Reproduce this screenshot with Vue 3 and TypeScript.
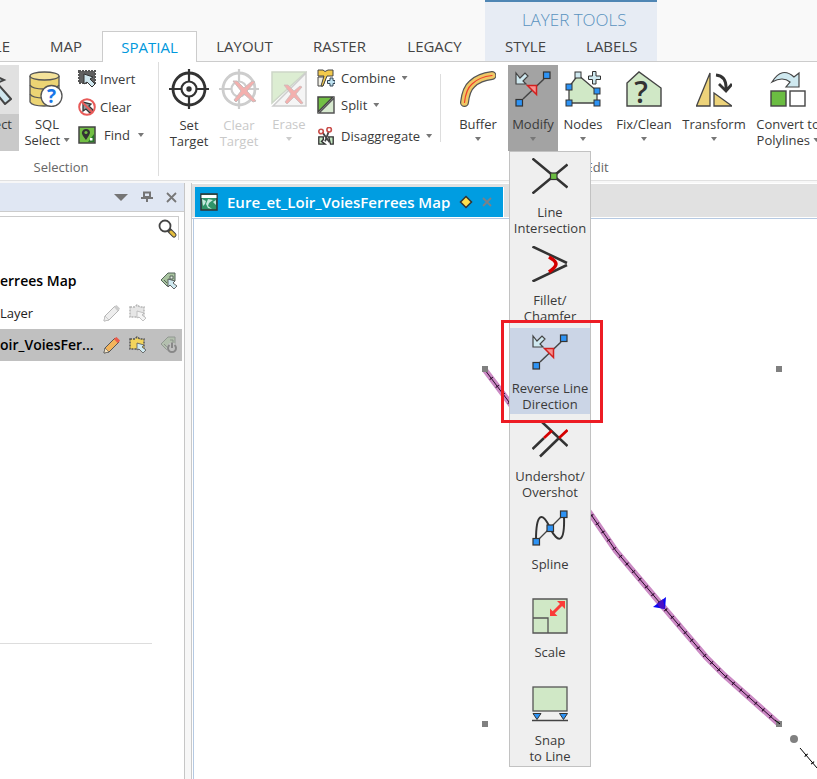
<script setup lang="ts">
import { ref } from 'vue'

interface Tool {
  icon: string
  lines: string[]
  arrow?: boolean
  inlineArrow?: boolean
  disabled?: boolean
  large?: boolean
}

const tabs = ['MAP', 'SPATIAL', 'LAYOUT', 'RASTER', 'LEGACY']
const layerTabs = ['STYLE', 'LABELS']
const activeTab = ref('SPATIAL')

const selectionActions: Tool[] = [
  { icon: 'invert', lines: ['Invert'] },
  { icon: 'clear', lines: ['Clear'] },
  { icon: 'find', lines: ['Find'], arrow: true },
]

const targetTools: Tool[] = [
  { icon: 'target', lines: ['Set', 'Target'], large: true },
  { icon: 'target-clear', lines: ['Clear', 'Target'], disabled: true, large: true },
  { icon: 'erase', lines: ['Erase'], arrow: true, disabled: true },
]

const objectActions: Tool[] = [
  { icon: 'combine', lines: ['Combine'], arrow: true },
  { icon: 'split', lines: ['Split'], arrow: true },
  { icon: 'disaggregate', lines: ['Disaggregate'], arrow: true },
]

const editTools: Tool[] = [
  { icon: 'buffer', lines: ['Buffer'], arrow: true },
  { icon: 'modify', lines: ['Modify'], arrow: true },
  { icon: 'nodes', lines: ['Nodes'], arrow: true },
  { icon: 'fix', lines: ['Fix/Clean'], arrow: true },
  { icon: 'transform', lines: ['Transform'], arrow: true },
  { icon: 'convert', lines: ['Convert to', 'Polylines'], inlineArrow: true },
]

const modifyMenu: Tool[] = [
  { icon: 'intersection', lines: ['Line', 'Intersection'] },
  { icon: 'fillet', lines: ['Fillet/', 'Chamfer'] },
  { icon: 'modify', lines: ['Reverse Line', 'Direction'] },
  { icon: 'undershot', lines: ['Undershot/', 'Overshot'] },
  { icon: 'spline', lines: ['Spline'] },
  { icon: 'scale', lines: ['Scale'] },
  { icon: 'snap', lines: ['Snap', 'to Line'] },
]
const highlighted = ref(2)
const search = ref('')

const railway = 'M291 151 L315 183 L398 297 L422 332 L466 384 L512 438 L530 456 L585 505'
</script>

<template>
  <div class="page">
    <svg class="sprite" aria-hidden="true">
      <symbol id="i-cursor" viewBox="0 0 28 35">
        <path d="M1 1 L1 22 L7 17 L21 34 L27 29 L13 13 L20 10 Z" fill="#cfe6ee" stroke="#444" stroke-width="2" />
      </symbol>
      <symbol id="i-sql" viewBox="0 0 36 36">
        <path d="M1 5 V31 Q3 35 15 35 Q28 35 30 31 V5" fill="#ecd474" stroke="#555" stroke-width="1.3" />
        <ellipse cx="15.500" cy="5" rx="14.500" ry="4" fill="#f4e29a" stroke="#555" stroke-width="1.3" />
        <path d="M1 14 Q3 18 15 18 Q28 18 30 14 M1 23 Q3 27 15 27" fill="none" stroke="#555" stroke-width="1.3" />
        <circle cx="22.500" cy="25" r="10.500" fill="#fff" stroke="#555" stroke-width="1.3" />
        <text x="22.500" y="32" text-anchor="middle" font-size="19" font-weight="700" fill="#1976e8">?</text>
      </symbol>
      <symbol id="i-invert" viewBox="0 0 18 18">
        <rect x="1" y="1" width="16" height="12" fill="#606060" stroke="#555" stroke-width="2" stroke-dasharray="2 1" />
        <path d="M6 4 V14 L9 12 L14 17 L17 14 L12 9 L15 7 Z" fill="#cfe6ee" stroke="#333" />
      </symbol>
      <symbol id="i-clear" viewBox="0 0 18 18">
        <path d="M5 4 V13 L8 11 L12 15 L15 12 L11 8 L13 6 Z" fill="#8d9a9e" stroke="#333" stroke-width="1.300" />
        <circle cx="9" cy="9" r="7.800" fill="none" stroke="#e85a58" stroke-width="2" />
        <path d="M4 4 L14 14" stroke="#e85a58" stroke-width="2" />
      </symbol>
      <symbol id="i-find" viewBox="0 0 18 18">
        <rect x="1" y="1" width="16" height="16" fill="#72bf44" stroke="#444" stroke-width="1.500" />
        <path d="M10 16 L16 8 V16 Z" fill="#27752a" />
        <path d="M8 14 Q3 8 4 6 Q5 3 8 3 Q12 3 12 7 Q11 10 8 14" fill="#333" />
        <circle cx="8" cy="6.500" r="1.600" fill="#72bf44" />
        <rect x="12" y="12" width="2.500" height="2.500" fill="#fff" />
      </symbol>
      <symbol id="i-target" viewBox="0 0 40 40">
        <g fill="none" stroke="#333" stroke-width="2.800">
          <circle cx="20" cy="20" r="16" />
          <circle cx="20" cy="20" r="7.500" stroke-width="2.200" />
          <path d="M20 0 V12 M20 28 V40 M0 20 H12 M28 20 H40" stroke-width="2.200" />
        </g>
        <circle cx="20" cy="20" r="2.700" fill="#333" />
      </symbol>
      <symbol id="i-target-clear" viewBox="0 0 40 40">
        <g fill="none" stroke="#cdcdcd" stroke-width="2.800">
          <circle cx="20" cy="20" r="16" />
          <circle cx="20" cy="20" r="7.500" stroke-width="2.200" />
          <path d="M20 0 V12 M20 28 V40 M0 20 H12 M28 20 H40" stroke-width="2.200" />
        </g>
        <path d="M14 12 L18 12 L25 19 L33 12 L36 13 L28 22 L37 32 L34 33 L25 25 L17 33 L15 31 L22 22 Z" fill="#f3b0ae" stroke="#c9bcbc" />
      </symbol>
      <symbol id="i-erase" viewBox="0 0 36 36">
        <path d="M1 1 H35 L1 32 Z" fill="#dcedd2" stroke="#cdd6c8" stroke-width="1.500" />
        <path d="M35 2 V35 H2 Z" fill="#f5f5f5" stroke="#cdcdcd" stroke-width="1.500" />
        <path d="M13 14 L17 14 L23 20 L29 15 L31 16 L25 23 L32 32 L30 33 L23 26 L16 33 L14 31 L20 23 Z" fill="#f3b0ae" stroke="#cbb" stroke-width=".8" />
      </symbol>
      <symbol id="i-combine" viewBox="0 0 18 18">
        <path d="M1 8 H9 L6 17 H1 Z" fill="#f0efe4" stroke="#444" />
        <path d="M1 1 H6 L8 2.500 L11 1 H16 V7 H10 L6 17 H4 L7 7 H1 Z" fill="#f2c94c" stroke="#444" />
        <path d="M13 9 H16 V11.500 H18 V14.500 H16 V17 H13 V14.500 H10.500 V11.500 H13 Z" fill="#bfe3f2" stroke="#345" />
      </symbol>
      <symbol id="i-split" viewBox="0 0 18 18">
        <path d="M1 1 H16 L1 16 Z" fill="#72bf44" stroke="#444" stroke-width="1.500" />
        <path d="M17 2 V17 H2 Z" fill="#d8ead0" stroke="#555" stroke-width="1.500" />
      </symbol>
      <symbol id="i-disaggregate" viewBox="0 0 18 20">
        <path d="M1 11 H6 V14 L4 16 L8 19 H1 Z M12 11 H17 V19 H14 Z" fill="#c2e6c0" stroke="#333" stroke-width="1.500" />
        <path d="M5 6 L13 17 M12 5 L8 16" stroke="#444" stroke-width="2" />
        <circle cx="3.500" cy="5" r="2.500" fill="none" stroke="#c94f4b" stroke-width="1.800" />
        <circle cx="12.500" cy="3" r="2.500" fill="none" stroke="#c94f4b" stroke-width="1.800" />
      </symbol>
      <symbol id="i-buffer" viewBox="0 0 36 36">
        <g fill="none" stroke-linecap="round">
          <path d="M4.500 31.500 Q6 18 12 13 Q19 6 32 4.500" stroke="#555" stroke-width="9" />
          <path d="M4.500 31.500 Q6 18 12 13 Q19 6 32 4.500" stroke="#efc765" stroke-width="6.600" />
          <path d="M4.500 31.500 Q6 18 12 13 Q19 6 32 4.500" stroke="#f0402c" stroke-width="1.200" />
        </g>
      </symbol>
      <symbol id="i-modify" viewBox="0 0 36 36">
        <path d="M8 28 L29 8" stroke="#444" stroke-width="1.500" />
        <path d="M1 2 V13 H11 L8 10 L13 5 L10 2 L5 7 Z" fill="#cfe9f0" stroke="#444" stroke-width="1.200" />
        <path d="M12.500 14.500 H21.500 V23.500 Z" fill="#f7918f" stroke="#d2201f" stroke-width="1.500" />
        <rect x="1" y="28.500" width="6.500" height="6.500" fill="#2d93f5" stroke="#333" stroke-width="1.200" />
        <rect x="28.500" y="1" width="6.500" height="6.500" fill="#2d93f5" stroke="#333" stroke-width="1.200" />
      </symbol>
      <symbol id="i-nodes" viewBox="0 0 36 36">
        <path d="M4 32 V16 L13 4 L32 20 V32 Z" fill="#d0e8c6" stroke="#444" stroke-width="1.300" />
        <g fill="#2d93f5" stroke="#333">
          <rect x="1" y="13" width="6" height="6" />
          <rect x="1" y="29" width="6" height="6" />
          <rect x="29" y="17" width="6" height="6" />
          <rect x="29" y="29" width="6" height="6" />
          <rect x="10" y="1" width="6" height="6" fill="#cfe9f0" />
          <path d="M27.500 0.500 H31 V5 H35.500 V8.500 H31 V13 H27.500 V8.500 H23.500 V5 H27.500 Z" fill="#cfe9f0" />
        </g>
      </symbol>
      <symbol id="i-fix" viewBox="0 0 36 36">
        <path d="M1 35 V12 L13 1 L35 17 V35 Z" fill="#d0e8c6" stroke="#444" stroke-width="1.400" />
        <text x="15" y="32" text-anchor="middle" font-size="30" font-weight="600" fill="#333">?</text>
      </symbol>
      <symbol id="i-transform" viewBox="0 0 36 36">
        <path d="M.5 35 L14 2 V35 Z M18 22 V35 H36 Z" fill="#edd37a" stroke="#444" stroke-width="1.300" />
        <path d="M20 4 Q31 5 30 19 M23 13 L30 20 L36 13" fill="none" stroke="#333" stroke-width="2.800" />
      </symbol>
      <symbol id="i-convert" viewBox="0 0 36 36">
        <path d="M2 11 Q12 -5 24 6 L29 2 V16 H16 L20 11 Q13 5 2 11 Z" fill="#cfe9f0" stroke="#444" stroke-width="1.200" />
        <rect x="1" y="20" width="15" height="15" fill="#6bbd42" stroke="#444" stroke-width="1.400" />
        <rect x="20" y="20" width="15" height="15" fill="#fff" stroke="#444" stroke-width="1.400" />
      </symbol>
      <symbol id="i-intersection" viewBox="0 0 36 36">
        <path d="M.5 .5 L35.500 29.500 M.5 35.500 L35.500 6.500" stroke="#333" stroke-width="2.500" />
        <rect x="18.500" y="15" width="6.500" height="6.500" fill="#6bbd42" stroke="#333" stroke-width="1.200" />
      </symbol>
      <symbol id="i-fillet" viewBox="0 0 36 36">
        <path d="M.5 .5 L35 17 M.5 35.500 L35 19" stroke="#333" stroke-width="2.500" />
        <path d="M17 11 Q24 15 24 18 Q24 21 17 26" fill="none" stroke="#d40000" stroke-width="3.500" />
      </symbol>
      <symbol id="i-undershot" viewBox="0 0 36 36">
        <path d="M10 0 L35.500 24 M.5 27 L12 16 M8 34.500 L27 16" stroke="#333" stroke-width="2.500" />
        <path d="M12 16 L20 8.500 M27 16 L35.500 8" stroke="#d40000" stroke-width="2.700" />
      </symbol>
      <symbol id="i-spline" viewBox="0 0 36 36">
        <path d="M4 32 L32 4" stroke="#444" stroke-width="1.200" />
        <path d="M4 30 C4 4 10 0 18 18 C26 34 33 34 32 6" fill="none" stroke="#333" stroke-width="2" />
        <g fill="#2d93f5" stroke="#333" stroke-width="1.200">
          <rect x="1" y="28.500" width="6.500" height="6.500" />
          <rect x="15" y="15" width="6.500" height="6.500" />
          <rect x="28.500" y="1" width="6.500" height="6.500" />
        </g>
      </symbol>
      <symbol id="i-scale" viewBox="0 0 36 36">
        <path d="M1 1 H35 V35 H1 Z M1 20 H16 V35" fill="#d0e8c6" stroke="#555" stroke-width="1.300" />
        <path d="M20 16 L31 5" stroke="#fb3b38" stroke-width="3" />
        <path d="M33 3 H25 L33 11 Z M18 18 V10.500 L25.500 18 Z" fill="#fb3b38" />
      </symbol>
      <symbol id="i-snap" viewBox="0 0 36 36">
        <rect x="1" y="1" width="34" height="24" fill="#d0e8c6" stroke="#555" stroke-width="1.300" />
        <path d="M0 34.500 H36" stroke="#444" stroke-width="1.300" />
        <path d="M1 27.500 H9 L5 33.500 Z M27.500 27.500 H35.500 L31.500 33.500 Z" fill="#2d93f5" stroke="#333" />
      </symbol>
      <symbol id="i-pencil" viewBox="0 0 18 18">
        <path d="M1 17 L2 12 L12 2 L16 6 L6 16 Z" fill="var(--pencil)" stroke="var(--edge)" />
        <path d="M12 2 L13.500 1 L17 4.500 L16 6 L14.500 7 L11 3 Z" fill="var(--tip)" />
        <path d="M1 17 L2 12 L6 16 Z" fill="var(--lead)" stroke="var(--edge)" stroke-width=".6" />
      </symbol>
      <symbol id="i-select" viewBox="0 0 18 18">
        <path d="M1 3 H6 L8 1 L11 3 H15 V13 H1 Z" fill="var(--area)" stroke="var(--edge)" stroke-width="1.500" stroke-dasharray="2 1" />
        <path d="M8 7 V14 L10 13 L14 17 L17 14 L13 11 L15 9 Z" fill="var(--arrow)" stroke="var(--edge)" stroke-width=".8" />
      </symbol>
      <symbol id="i-tag" viewBox="0 0 18 18">
        <path d="M1 8 L8 1 H15 V9 L9 14 H7 Z" fill="#a9c4a0" stroke="#55655a" />
        <path d="M4 8 L7 11 M10 4 H13 V7 H10 Z" fill="#e6eee2" stroke="#55655a" />
        <path d="M8 7 V15 L10 13 L14 17 L17 14 L13 11 L15 9 Z" fill="#cfe9f0" stroke="#444" stroke-width=".8" />
      </symbol>
      <symbol id="i-tag-off" viewBox="0 0 18 18">
        <path d="M1 8 L8 1 H15 V9 L9 14 H7 Z" fill="#b3bfae" stroke="#929892" />
        <path d="M4 8 L7 11 M10 4 H13 V7" fill="none" stroke="#8b928b" />
        <circle cx="12" cy="12" r="5.500" fill="#c0c0c0" />
        <path d="M9.500 9 A4 4 0 1 0 14.500 9 M12 6.500 V12" fill="none" stroke="#888" stroke-width="2" />
      </symbol>
    </svg>

    <nav class="tabs" aria-label="Ribbon tabs">
      <button class="tab cut" type="button">LE</button>
      <button
        v-for="tab in tabs"
        :key="tab"
        class="tab"
        :class="{ active: activeTab === tab, short: tab === 'MAP' }"
        type="button"
        @click="activeTab = tab"
      >{{ tab }}</button>
      <div class="layer-tools">
        <div class="layer-title">LAYER TOOLS</div>
        <div class="layer-tabs">
          <button v-for="tab in layerTabs" :key="tab" class="tab" type="button">{{ tab }}</button>
        </div>
      </div>
    </nav>

    <div class="ribbon">
      <section class="group selection">
        <div class="group-body">
          <button class="select-tool" type="button">
            <span class="select-icon"><svg><use href="#i-cursor" /></svg></span>
            <span class="select-label">ect</span>
          </button>
          <button class="tool sql" type="button">
            <svg class="icon"><use href="#i-sql" /></svg>
            <span>SQL</span>
            <span>Select <i class="caret inline" /></span>
          </button>
          <div class="stack">
            <button v-for="a in selectionActions" :key="a.icon" class="small" :class="a.icon" type="button">
              <svg class="small-icon"><use :href="'#i-' + a.icon" /></svg>
              <span>{{ a.lines[0] }}</span>
              <i v-if="a.arrow" class="caret" />
            </button>
          </div>
        </div>
        <div class="group-label">Selection</div>
      </section>

      <section class="group target">
        <div class="group-body">
          <button
            v-for="t in targetTools"
            :key="t.icon"
            class="tool"
            :class="{ disabled: t.disabled }"
            :disabled="t.disabled"
            type="button"
          >
            <svg class="icon" :class="{ large: t.large }"><use :href="'#i-' + t.icon" /></svg>
            <span v-for="l in t.lines" :key="l">{{ l }}</span>
            <i v-if="t.arrow" class="caret below" />
          </button>
          <div class="stack objects">
            <button v-for="a in objectActions" :key="a.icon" class="small" :class="a.icon" type="button">
              <svg class="small-icon"><use :href="'#i-' + a.icon" /></svg>
              <span>{{ a.lines[0] }}</span>
              <i class="caret" />
            </button>
          </div>
        </div>
      </section>

      <section class="group edit">
        <div class="group-body">
          <div v-for="t in editTools" :key="t.icon" class="tool-slot" :class="t.icon">
            <button class="tool" :class="{ open: t.icon === 'modify' }" type="button">
              <svg class="icon"><use :href="'#i-' + t.icon" /></svg>
              <span v-for="(l, i) in t.lines" :key="l">{{ l }} <i v-if="t.inlineArrow && i === 1" class="caret inline" /></span>
              <i v-if="t.arrow" class="caret below" />
            </button>
            <div v-if="t.icon === 'modify'" class="menu" role="menu">
              <button
                v-for="(m, i) in modifyMenu"
                :key="m.lines[0]"
                class="menu-item"
                :class="{ hot: highlighted === i }"
                role="menuitem"
                type="button"
              >
                <svg class="icon"><use :href="'#i-' + m.icon" /></svg>
                <span v-for="l in m.lines" :key="l">{{ l }}</span>
              </button>
            </div>
          </div>
        </div>
        <div class="group-label">Edit</div>
      </section>
    </div>

    <div class="workspace">
      <aside class="layers">
        <header class="panel-head">
          <button type="button" aria-label="Panel options"><svg width="14" height="10"><path d="M0 2 H14 L7 9 Z" fill="#757575" /></svg></button>
          <button type="button" aria-label="Pin panel"><svg width="12" height="12"><path d="M3 1.500 H9 V6 H3 Z M0 7 H12 M6 7 V11" fill="none" stroke="#757575" stroke-width="2" /></svg></button>
          <button type="button" aria-label="Close panel"><svg width="11" height="11"><path d="M1 1 L10 10 M10 1 L1 10" stroke="#777" stroke-width="1.800" /></svg></button>
        </header>
        <div class="search">
          <input v-model="search" type="text" aria-label="Search layers" />
          <svg width="20" height="20" viewBox="0 0 20 20">
            <path d="M11 11 L16 16" stroke="#444" stroke-width="5" stroke-linecap="round" />
            <path d="M13 13 L16 16" stroke="#e5bd3c" stroke-width="3" stroke-linecap="round" />
            <circle cx="7" cy="7" r="5.500" fill="#fff" stroke="#444" stroke-width="1.800" />
          </svg>
        </div>
        <div class="layer-row">
          <strong>errees Map</strong>
          <svg class="small-icon"><use href="#i-tag" /></svg>
        </div>
        <div class="layer-row faded">
          <span>Layer</span>
          <svg class="small-icon"><use href="#i-pencil" /></svg>
          <svg class="small-icon"><use href="#i-select" /></svg>
          <i class="no-icon" />
        </div>
        <div class="layer-row current">
          <strong>oir_VoiesFer...</strong>
          <svg class="small-icon"><use href="#i-pencil" /></svg>
          <svg class="small-icon"><use href="#i-select" /></svg>
          <svg class="small-icon tag-off"><use href="#i-tag-off" /></svg>
        </div>
        <hr />
      </aside>

      <main class="map-window">
        <div class="doc-tabs">
          <div class="doc-tab">
            <svg width="18" height="18">
              <rect x="1" y="1" width="16" height="16" fill="#2f9468" stroke="#333" stroke-width="1.500" />
              <path d="M1.500 2 H16.500 V5 H1.500 Z" fill="#fff" />
              <path d="M2 6 L6 8 L5 11 L3 13 Z M8 6 L13 7 L9 10 L8 13 L12 16 L8 15 L6 11 Z M13 9 L16 7 V12 Z" fill="#c5e8dc" />
            </svg>
            <span>Eure_et_Loir_VoiesFerrees Map</span>
            <svg width="14" height="14"><path d="M7 1.500 L12.500 7 L7 12.500 L1.500 7 Z" fill="#ffe04d" stroke="#333" stroke-width="1.500" /></svg>
            <button type="button" aria-label="Close map"><svg width="10" height="10"><path d="M1 1 L9 9 M9 1 L1 9" stroke="#7c8187" stroke-width="1.800" /></svg></button>
          </div>
        </div>
        <div class="canvas">
          <svg width="623" height="560" role="img" aria-label="Railway line with selection handles">
            <path :d="railway" fill="none" stroke="#cb8ac4" stroke-width="6" />
            <path :d="railway" fill="none" stroke="#2b0a2b" stroke-width="1" />
            <path :d="railway" fill="none" stroke="#2b0a2b" stroke-width="4" stroke-dasharray="1 9" />
            <path d="M472 378 L459 388 L471 390 Z" fill="#0707f5" />
            <path d="M463 385 L469 380 L471 390 L466 389 Z" fill="#4a0fc4" />
            <g fill="#808080">
              <rect x="288" y="147" width="6" height="6" />
              <rect x="582" y="147" width="6" height="6" />
              <rect x="288" y="502" width="6" height="6" />
              <rect x="582" y="502" width="6" height="6" />
              <circle cx="600" cy="520" r="4" />
            </g>
            <path d="M581 501 L586 505 M606 529 L623 549" stroke="#000" />
            <path d="M606 529 L623 549" stroke="#000" stroke-width="4" stroke-dasharray="1 9" stroke-dashoffset="-9" />
          </svg>
        </div>
      </main>
    </div>
  </div>
</template>

<style>
body {
  margin: 0;
  background: #fff;
}
</style>

<style scoped>
.page {
  display: flex;
  flex-direction: column;
  min-height: 100vh;
  overflow: hidden;
  background: #fff;
  color: #3a3a3a;
  font: 13px/16px "Open Sans", "Noto Sans", sans-serif;
}

.page * {
  box-sizing: border-box;
}

button {
  padding: 0;
  border: 0;
  background: none;
  color: inherit;
  font: inherit;
}

.sprite {
  display: none;
}

.tabs {
  display: flex;
  align-items: flex-end;
  height: 62px;
  border-bottom: 1px solid #ccc;
  background: #f9f9f9;
  color: #444;
}

.tab {
  min-width: 95px;
  height: 30px;
  font-size: 15px;
  line-height: 30px;
  text-align: center;
  white-space: nowrap;
}

.tab.short {
  min-width: 72px;
}

.tab.cut {
  display: flex;
  justify-content: flex-end;
  width: 30px;
  min-width: 0;
  padding-right: 20px;
}

.tab.active {
  height: 31px;
  margin-bottom: -1px;
  border: 1px solid #ccc;
  border-bottom: 0;
  background: #fff;
  color: #0098dc;
}

.layer-tools {
  height: 61px;
  margin-left: 3px;
  border-top: 2px solid #4f86b4;
  background: #e7ecf4;
}

.layer-title {
  height: 29px;
  padding-left: 6px;
  color: #5a93bf;
  font-size: 17px;
  font-weight: 300;
  line-height: 36px;
  text-align: center;
}

.layer-tabs {
  display: flex;
}

.layer-tabs .tab {
  min-width: 0;
  flex: 1 0 auto;
  padding: 0 20px;
}

.layer-tools {
  min-width: 172px;
}

.ribbon {
  display: flex;
  height: 119px;
  border-bottom: 1px solid #e1e1e1;
  background: #fff;
}

.group {
  display: flex;
  flex: none;
  flex-direction: column;
}

.selection {
  width: 159px;
  height: 114px;
  border-right: 1px solid #ddd;
}

.target {
  width: 282px;
  background: linear-gradient(#ddd, #ddd) right 12px / 1px 68px no-repeat;
}

.edit {
  padding-left: 7px;
}

.group-body {
  display: flex;
  height: 97px;
  padding-top: 3px;
}

.target .group-body {
  padding-left: 5px;
}

.group-label {
  height: 16px;
  color: #666;
  text-align: center;
}

.selection .group-label {
  padding-right: 36px;
}

.edit .group-label {
  width: 298px;
}

.select-tool {
  display: flex;
  flex-direction: column;
  width: 19px;
  height: 86px;
}

.select-icon,
.select-label {
  display: flex;
  justify-content: flex-end;
  width: 19px;
  overflow: hidden;
}

.select-icon {
  height: 49px;
  padding: 5px 7px 0 0;
  background: #e1e1e1;
}

.select-icon svg {
  flex: none;
  width: 28px;
  height: 35px;
}

.select-label {
  height: 37px;
  padding: 2px 7px 0 0;
  background: #c9c9c9;
}

.tool {
  display: flex;
  flex-direction: column;
  align-items: center;
  width: 50px;
  height: 86px;
  padding-top: 6px;
  white-space: nowrap;
}

.tool.sql {
  width: 56px;
}

.icon {
  flex: none;
  width: 36px;
  height: 36px;
  margin-bottom: 10px;
}

.ribbon .tool .icon {
  margin-bottom: 9px;
}

.ribbon .tool .icon.large {
  width: 40px;
  height: 40px;
  margin: -2px 0 8px;
}

.disabled {
  color: #c9c9c9;
}

.caret {
  display: inline-block;
  flex: none;
  width: 6px;
  height: 4px;
  background: #777;
  clip-path: polygon(0 0, 100% 0, 50% 100%);
}

.caret.inline {
  vertical-align: 3px;
}

.caret.below {
  margin-top: 5px;
}

.disabled .caret {
  background: #ccc;
}

.stack {
  display: flex;
  flex-direction: column;
  padding-left: 3px;
}

.small {
  display: flex;
  align-items: center;
  height: 28px;
  gap: 4px;
  white-space: nowrap;
}

.small-icon {
  flex: none;
  width: 18px;
  height: 18px;
}

.small.find {
  gap: 8px;
}

.objects .small {
  gap: 6px;
}

.objects .combine {
  height: 26px;
}

.objects .disaggregate {
  height: 34px;
}

.tool-slot {
  position: relative;
}

.edit .tool {
  width: auto;
  min-width: 50px;
}

.edit .buffer .tool {
  min-width: 60px;
}

.edit .fix .tool {
  min-width: 72px;
}

.edit .transform .tool {
  min-width: 68px;
}

.edit .convert .tool {
  min-width: 80px;
}

.tool.open {
  background: #a3a3a3;
}

.menu {
  position: absolute;
  z-index: 2;
  top: 86px;
  left: 1px;
  display: flex;
  flex-direction: column;
  gap: 2px;
  width: 82px;
  border: 1px solid #c2c2c2;
  background: #efefef;
}

.menu-item {
  position: relative;
  display: flex;
  flex-direction: column;
  align-items: center;
  height: 86px;
  padding-top: 6px;
  color: #3a3a3a;
  white-space: nowrap;
}

.menu-item.hot {
  z-index: 1;
  background: #cbd5e6;
}

.menu-item.hot::after {
  position: absolute;
  inset: -8px -13px -9px -9px;
  border: 3px solid #ed1c24;
  content: "";
}

.workspace {
  display: flex;
  flex: 1;
  padding-top: 2px;
  background: #f7f7f7;
}

.layers {
  flex: none;
  width: 185px;
  border-right: 1px solid #c6c6c6;
  background: #fff;
}

.panel-head {
  display: flex;
  align-items: center;
  justify-content: flex-end;
  height: 29px;
  gap: 13px;
  padding-right: 7px;
  border-bottom: 1px solid #ccc;
  background: #e0e7f3;
}

.panel-head button {
  display: flex;
}

.search {
  display: flex;
  align-items: center;
  height: 24px;
  margin: 4px 5px 25px 0;
  border-top: 1px solid #ccc;
  border-right: 1px solid #ccc;
}

.search input {
  flex: 1;
  min-width: 0;
  border: 0;
  outline: 0;
  font: inherit;
}

.layer-row {
  --pencil: #f3b45b;
  --tip: #ea5a4b;
  --lead: #f3e3c4;
  --area: #f2d45c;
  --arrow: #cfe9f0;
  --edge: #555;
  display: flex;
  align-items: center;
  height: 32px;
  margin-right: 2px;
  padding-right: 4px;
  gap: 8px;
  color: #222;
}

.layer-row > :first-child {
  flex: 1;
  white-space: nowrap;
}

.layer-row strong {
  color: #000;
  font-size: 14px;
  font-weight: 600;
}

.layer-row.faded {
  --pencil: #eee;
  --tip: #ccc;
  --lead: #eee;
  --area: #e6e6e6;
  --arrow: #f4f4f4;
  --edge: #b5b5b5;
}

.no-icon {
  width: 23px;
}

.current {
  background: #c0c0c0;
}

.tag-off {
  margin-left: 5px;
}

hr {
  width: 152px;
  margin: 282px 0 0;
  border: 0;
  border-top: 1px solid #ddd;
}

.map-window {
  flex: 1;
  min-width: 0;
  display: flex;
  flex-direction: column;
  margin-left: 6px;
  border-left: 1px solid #c9c9c9;
  background: #fff;
}

.doc-tabs {
  height: 36px;
  padding: 4px 0 2px 3px;
  background: linear-gradient(#e1e1e1, #e1e1e1) 0 1px / 100% 33px no-repeat;
  border-bottom: 1px solid #b5c9e2;
}

.doc-tab {
  display: inline-flex;
  align-items: center;
  height: 30px;
  padding: 0 11px 0 5px;
  gap: 9px;
  border-right: 1px solid #fff;
  background: #009de1;
  color: #fff;
  font-size: 15px;
  font-weight: 600;
  white-space: nowrap;
}

.doc-tab button {
  display: flex;
}

.canvas {
  flex: 1;
  margin-left: 1px;
  overflow: hidden;
  border-left: 1px solid #b5c9e2;
}

.canvas svg {
  display: block;
}
</style>
